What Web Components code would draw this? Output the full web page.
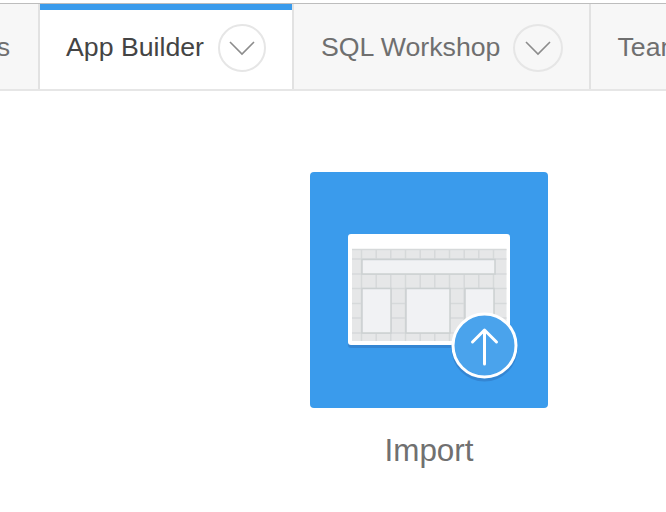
<!DOCTYPE html>
<html>
<head>
<meta charset="utf-8">
<title>App Builder</title>
<style>
  html, body { margin: 0; background: #fff; }
  body { font-family: "Liberation Sans", Arial, sans-serif; overflow: hidden; height: 512px; }
</style>
</head>
<body>
<tab-bar>
  <nav-tab class="first">Packaged Apps</nav-tab>
  <nav-tab active menu>App Builder</nav-tab>
  <nav-tab menu wide>SQL Workshop</nav-tab>
  <nav-tab>Team Development</nav-tab>
</tab-bar>
<page-body>
  <import-tile>Import</import-tile>
</page-body>

<script>
class TabBar extends HTMLElement {
  constructor() {
    super();
    this.attachShadow({ mode: 'open' }).innerHTML = `
      <style>
        :host {
          display: flex;
          height: 85px;
          margin-top: 3px;
          border-top: 1px solid #bdbdbd;
          border-bottom: 2px solid #e6e6e6;
          background: #f7f7f7;
          overflow: hidden;
        }
      </style>
      <slot></slot>`;
  }
}

class NavTab extends HTMLElement {
  constructor() {
    super();
    const menu = this.hasAttribute('menu');
    this.attachShadow({ mode: 'open' }).innerHTML = `
      <style>
        :host {
          display: flex;
          flex: none;
          align-items: center;
          box-sizing: border-box;
          padding: 2px 26px 0;
          border-right: 2px solid #e2e2e2;
          font-size: 26.7px;
          color: #6f6f6f;
          white-space: nowrap;
        }
        :host(.first) {
          width: 40px;
          padding: 2px 28px 0 0;
          justify-content: flex-end;
          overflow: hidden;
        }
        :host([wide]) { padding-left: 27px; }
        :host([active]) {
          background: #fff;
          color: #444;
          box-shadow: inset 0 6px 0 #3a9bec;
        }
        .label { flex: none; }
        .more {
          flex: none;
          box-sizing: border-box;
          width: 48px;
          height: 48px;
          margin-left: 14px;
          border: 2px solid #e6e6e6;
          border-radius: 50%;
          display: flex;
          align-items: center;
          justify-content: center;
        }
        :host([wide]) .more { width: 50px; margin-left: 13px; }
        svg { display: block; }
      </style>
      <span class="label"><slot></slot></span>
      ${menu ? `<span class="more">
        <svg width="26" height="16" viewBox="0 0 26 16">
          <path d="M1 2L13 14L25 2" fill="none" stroke="#8c8c8c" stroke-width="1.6"/>
        </svg>
      </span>` : ''}`;
  }
}

class PageBody extends HTMLElement {
  constructor() {
    super();
    this.attachShadow({ mode: 'open' }).innerHTML = `
      <style>
        :host { display: block; padding: 81px 0 0 310px; }
      </style>
      <slot></slot>`;
  }
}

class ImportTile extends HTMLElement {
  constructor() {
    super();
    this.attachShadow({ mode: 'open' }).innerHTML = `
      <style>
        :host {
          display: flex;
          flex-direction: column;
          align-items: center;
          width: 238px;
        }
        .tile {
          width: 238px;
          height: 236px;
          background: #3a9bec;
          border-radius: 4px;
          overflow: hidden;
        }
        svg { display: block; }
        .label {
          margin-top: 25px;
          font-size: 31.4px;
          line-height: 36px;
          color: #707070;
        }
      </style>
      <div class="tile">
        <!-- viewBox uses the page coordinates of the tile -->
        <svg width="238" height="236" viewBox="310 172 238 236">
          <rect x="348" y="237" width="162" height="111" rx="3" fill="#3486d3"/>
          <rect x="348" y="234" width="162" height="111" rx="3" fill="#fff"/>
          <rect x="352" y="249" width="154.5" height="92" fill="#e6e7e8"/>
          <path fill="none" stroke="#d6d9da" stroke-width="1.5" d="
            M352 249.5H506.5 M352 259H506.5 M352 274H506.5 M352 288.5H506.5 M352 333H506.5
            M352 303.5H362 M352 318H362 M391 303.5H406 M391 318H406 M450 303.5H465 M450 318H465 M494 303.5H506.5 M494 318H506.5
            M361.5 249V341 M376.2 249V259 M390.8 249V259 M405.5 249V259 M420.2 249V259 M434.8 249V259 M449.5 249V259 M464.2 249V259 M478.8 249V259 M493.5 249V341
            M376.2 274V288 M390.8 274V341 M405.5 274V341 M420.2 274V288 M434.8 274V288 M449.5 274V341 M464.2 274V341 M478.8 274V288
            M376.2 333V341 M420.2 333V341 M434.8 333V341"/>
          <g fill="#f1f2f4" stroke="#cbd0d1" stroke-width="1.5">
            <rect x="362" y="259.5" width="133" height="14.5"/>
            <rect x="362" y="288.5" width="29" height="44.5"/>
            <rect x="406" y="288.5" width="44" height="44.5"/>
            <rect x="465" y="288.5" width="29" height="44.5"/>
          </g>
          <circle cx="484.5" cy="348.5" r="33" fill="#3486d3"/>
          <circle cx="484.5" cy="345.5" r="31.5" fill="#4aa3ec" stroke="#fff" stroke-width="3"/>
          <path d="M484.5 364V330M472.5 342L484.5 330L496.5 342" fill="none" stroke="#fff" stroke-width="3" stroke-linecap="round" stroke-linejoin="round"/>
        </svg>
      </div>
      <div class="label"><slot></slot></div>`;
  }
}

customElements.define('tab-bar', TabBar);
customElements.define('nav-tab', NavTab);
customElements.define('page-body', PageBody);
customElements.define('import-tile', ImportTile);
</script>
</body>
</html>
